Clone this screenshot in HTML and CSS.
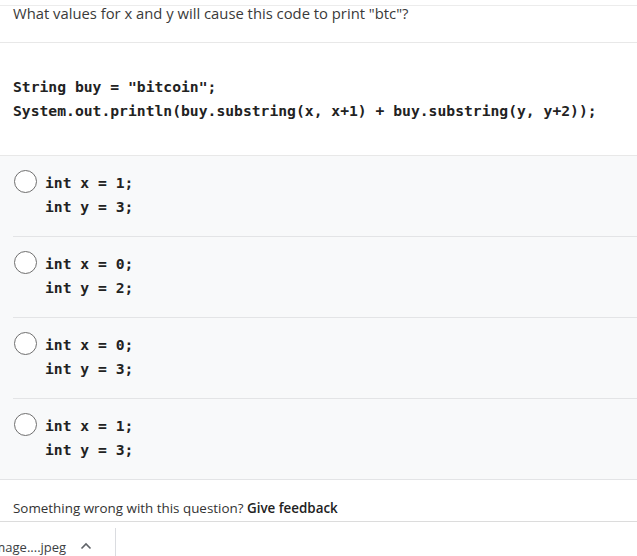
FILE: index.html
```html
<!DOCTYPE html>
<html>
<head>
<meta charset="utf-8">
<link rel="stylesheet" href="styles.css">
</head>
<body>
<div class="page">
  <div class="question">What values for x and y will cause this code to print "btc"?</div>
  <div class="code">
    <div class="line">String buy = "bitcoin";</div>
    <div class="line">System.out.println(buy.substring(x, x+1) + buy.substring(y, y+2));</div>
  </div>
  <div class="options">
    <div class="option">
      <span class="radio"></span>
      <div class="opt-code"><div class="line">int x = 1;</div><div class="line">int y = 3;</div></div>
    </div>
    <div class="option">
      <span class="radio"></span>
      <div class="opt-code"><div class="line">int x = 0;</div><div class="line">int y = 2;</div></div>
    </div>
    <div class="option">
      <span class="radio"></span>
      <div class="opt-code"><div class="line">int x = 0;</div><div class="line">int y = 3;</div></div>
    </div>
    <div class="option">
      <span class="radio"></span>
      <div class="opt-code"><div class="line">int x = 1;</div><div class="line">int y = 3;</div></div>
    </div>
  </div>
  <div class="feedback">Something wrong with this question? <b>Give feedback</b></div>
  <div class="downloads">
    <div class="dl-item">
      <span class="dl-name">image....jpeg</span>
      <svg class="chev" width="12" height="8" viewBox="0 0 12 8"><path d="M1.5 6.5 L6 2 L10.5 6.5" fill="none" stroke="#5f6368" stroke-width="1.6"/></svg>
    </div>
  </div>
</div>
</body>
</html>
```

FILE: styles.css
```css
html, body {
  margin: 0;
  padding: 0;
  background: #ffffff;
}
.page {
  width: 637px;
  height: 556px;
  overflow: hidden;
  font-family: "Open Sans", "Noto Sans", sans-serif;
  color: #333;
}
.question {
  margin-top: 5px;
  border-top: 1px solid #ececec;
  border-bottom: 1px solid #e8e8e8;
  padding: 0 0 22px 13px;
  font-size: 14.8px;
  line-height: 14px;
  color: #3a3a3a;
}
.code {
  padding: 32px 0 32px 13px;
  border-bottom: 1px solid #e8e8e8;
  font-family: "DejaVu Sans Mono", monospace;
  font-weight: bold;
  font-size: 14.7px;
  color: #222;
}
.line {
  line-height: 24px;
  height: 24px;
  white-space: pre;
}
.options {
  background: #f8f9fa;
  border-bottom: 1px solid #e3e4e6;
}
.option {
  display: flex;
  align-items: flex-start;
  margin-left: 13px;
  padding: 15px 0 17px 1px;
  border-bottom: 1px solid #e3e4e6;
}
.option:last-child {
  border-bottom: none;
}
.radio {
  width: 21px;
  height: 21px;
  border: 1.3px solid #6f6f6f;
  border-radius: 50%;
  background: #ffffff;
  margin-top: -1px;
  flex: none;
}
.opt-code {
  margin-left: 8px;
  font-family: "DejaVu Sans Mono", monospace;
  font-weight: bold;
  font-size: 14.7px;
  color: #222;
}
.feedback {
  padding: 20px 0 5px 13px;
  line-height: 16px;
  font-size: 13.4px;
  color: #333;
  border-bottom: 1px solid #dcdcdc;
}
.feedback b {
  color: #222;
  font-weight: 600;
}
.downloads {
  height: 34px;
  display: flex;
}
.dl-item {
  width: 115px;
  border-right: 1px solid #dadce0;
  margin-top: 6px;
  display: flex;
  align-items: center;
  padding-top: 10px;
}
.dl-name {
  margin-left: -10px;
  font-size: 13px;
  color: #3c4043;
  white-space: nowrap;
}
.chev {
  margin-left: 14px;
  margin-top: -2px;
}
```
